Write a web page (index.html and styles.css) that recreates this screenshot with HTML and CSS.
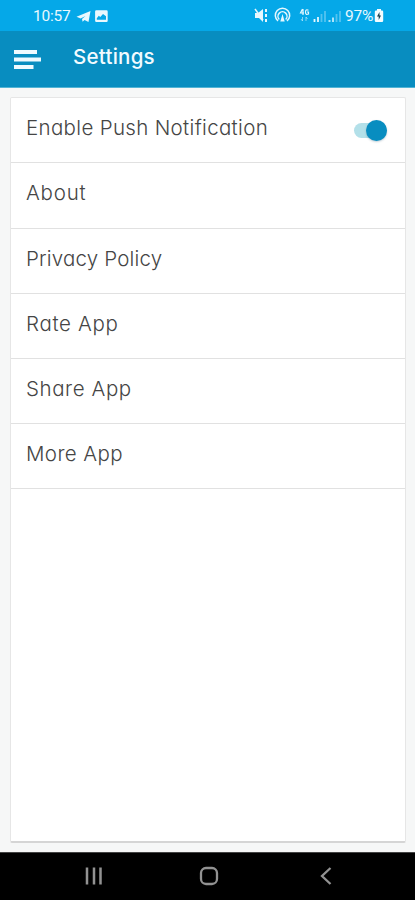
FILE: index.html
```
<!DOCTYPE html>
<html lang="en">
<head>
<meta charset="utf-8">
<meta name="viewport" content="width=device-width, initial-scale=1">
<title>Settings</title>
<link rel="stylesheet" href="styles.css">
</head>
<body>
<div class="statusbar">
  <span class="clock">10:57</span>
  <svg class="notices" width="34" height="16" viewBox="0 0 34 16" fill="#e9f8fe">
    <path d="M.5 8.800 14.500 3 12.500 14 8.500 12 6.600 13.700 6 11 9.500 8 4.600 10.400z"/>
    <path fill-rule="evenodd" d="M20.300 2.300h10.200q1.200 0 1.200 1.200v9.300q0 1.200-1.200 1.200H20.300q-1.200 0-1.200-1.200V3.500q0-1.200 1.200-1.200zM20.800 11.800h9.200V8.300L27 6l-2.700 3-1.500-1.200-2 2.500z"/>
  </svg>
  <svg class="signals" width="88" height="20" viewBox="0 0 88 20" fill="none" stroke="#e6f7fe">
    <path fill="#e6f7fe" stroke="none" d="M1 7h3l5-4v13l-4-4H1z"/>
    <path d="M1 3l8 11" stroke-width="1.500"/>
    <path d="M12 3v3M12 8v3M12 13v3" stroke-width="2"/>
    <path d="M24 15A7.200 7.200 0 1 1 33 15M25.300 13.500A4.500 4.500 0 1 1 31.700 13.500" stroke-width="1.500"/>
    <path d="M28.500 8l-2.200 7.500h4.400z" fill="#e6f7fe" stroke="none"/>
    <path d="M48.500 3l-2 4h3.500M49 3v6M54.500 4.200q-3-1.200-3 2t3 1.800V6H53" stroke-width="1.200"/>
    <path d="M48.500 11v4M47 13l1.500 2M52 15v-4M53.500 13L52 11" stroke-width="1" opacity=".55"/>
    <path d="M60.500 13v3M64 11v5" stroke-width="1.800"/>
    <path d="M67.500 8v8M71 5v11" stroke-width="1.800" opacity=".35"/>
    <path d="M75.500 14v2M79 11.500V16" stroke-width="2" opacity=".75"/>
    <path d="M82.500 8v8M86 5v11" stroke-width="1.800" opacity=".35"/>
  </svg>
  <span class="percent">97%</span>
  <svg class="battery" width="10" height="14" viewBox="0 0 10 14">
    <path fill="#f4fcff" d="M3 0h4v1.500h1q1.200 0 1.200 1.200v9q0 1.300-1.200 1.300H2Q.8 13 .8 11.700v-9Q.8 1.500 2 1.500h1z"/>
    <path fill="#173d4c" d="M5.500 3L3 7.500h1.700V11L7 6.500H5.500z"/>
  </svg>
</div>
<header class="appbar">
  <svg class="menu" width="28" height="20" viewBox="0 0 28 20" fill="#eefaff">
    <path d="M0 0h23v4H0zM0 7.500h27v4H0zM0 15h19.500v4H0z"/>
  </svg>
  <h1 class="title">Settings</h1>
</header>
<main class="content">
  <div class="card">
    <div class="row"><span class="label push">Enable Push Notification</span><span class="switch"></span></div>
    <div class="row"><span class="label about">About</span></div>
    <div class="row"><span class="label privacy">Privacy Policy</span></div>
    <div class="row"><span class="label rate">Rate App</span></div>
    <div class="row"><span class="label share">Share App</span></div>
    <div class="row"><span class="label more">More App</span></div>
  </div>
</main>
<nav class="navbar">
  <svg width="18" height="18" viewBox="0 0 18 18" fill="none" stroke="#929292" stroke-width="2.500"><path d="M2 .5v17M9 .5v17M15.500 .5v17"/></svg>
  <svg width="20" height="20" viewBox="0 0 20 20" fill="none" stroke="#929292" stroke-width="2.300"><rect x="2" y="2" width="16" height="16" rx="5"/></svg>
  <svg width="12" height="18" viewBox="0 0 12 18" fill="none" stroke="#929292" stroke-width="2.300"><path d="M10.500 1L2 9l8.500 8"/></svg>
</nav>
</body>
</html>
```
FILE: styles.css
```
* { box-sizing: border-box; }
body {
  margin: 0;
  height: 900px;
  display: flex;
  flex-direction: column;
  background: #f6f7f7;
  font-family: Inter, sans-serif;
  font-feature-settings: "cv11";
  overflow: hidden;
}
svg { display: block; flex: none; }
.statusbar {
  height: 31px;
  flex: none;
  display: flex;
  align-items: center;
  padding: 1px 31px 0 33px;
  background: #05a8e8;
  color: #e9f8fe;
  font-family: Roboto, sans-serif;
  font-size: 15.5px;
  line-height: 20px;
}
.clock { width: 43px; letter-spacing: -0.2px; }
.signals { margin-left: 144px; }
.percent { margin-left: 3px; width: 29px; letter-spacing: -0.2px; }
.appbar {
  height: 57px;
  flex: none;
  display: flex;
  padding-left: 14px;
  background: #088dc0;
  border-bottom: 1px solid #52b4d5;
}
.menu { margin-top: 19px; }
.title {
  margin: 12px 0 0 31px;
  font-size: 20.5px;
  line-height: 28px;
  font-weight: 500;
  letter-spacing: 0.25px;
  color: #f2fbff;
}
.content { flex: 1; padding: 9px 9px 9px 10px; }
.card {
  height: 100%;
  background: #fff;
  border: 1px solid #e6e6e6;
  border-bottom: 2px solid #d5d5d5;
  border-radius: 2px;
}
.row {
  height: 65px;
  display: flex;
  justify-content: space-between;
  padding: 15px 18px 0 15px;
  border-bottom: 1px solid #e1e1e1;
}
.row:nth-child(2) { height: 66px; }
.label {
  font-size: 20.5px;
  line-height: 30px;
  font-weight: 300;
  color: #454545;
  white-space: nowrap;
}
.row:nth-child(n+3) .label { line-height: 30px; }
.push { letter-spacing: 0.33px; }
.about { letter-spacing: 0.8px; }
.privacy { letter-spacing: 0.18px; }
.rate { letter-spacing: 0.68px; }
.share { letter-spacing: 0.58px; }
.more { letter-spacing: 0.4px; }
.switch {
  width: 33px;
  height: 15px;
  margin-top: 10px;
  border-radius: 8px;
  background: #b3e0e9;
  display: flex;
  align-items: center;
  justify-content: flex-end;
}
.switch::after {
  content: "";
  width: 21px;
  height: 21px;
  flex: none;
  border-radius: 50%;
  background: #088dc0;
  box-shadow: 0 1px 2px rgba(0, 60, 90, .25);
}
.navbar {
  height: 48px;
  flex: none;
  display: flex;
  align-items: center;
  padding: 0 0 1px 85px;
  background: #000;
  border-top: 1px solid #444;
}
.navbar svg:nth-child(2) { margin-left: 96px; }
.navbar svg:nth-child(3) { margin-left: 101px; }
```
